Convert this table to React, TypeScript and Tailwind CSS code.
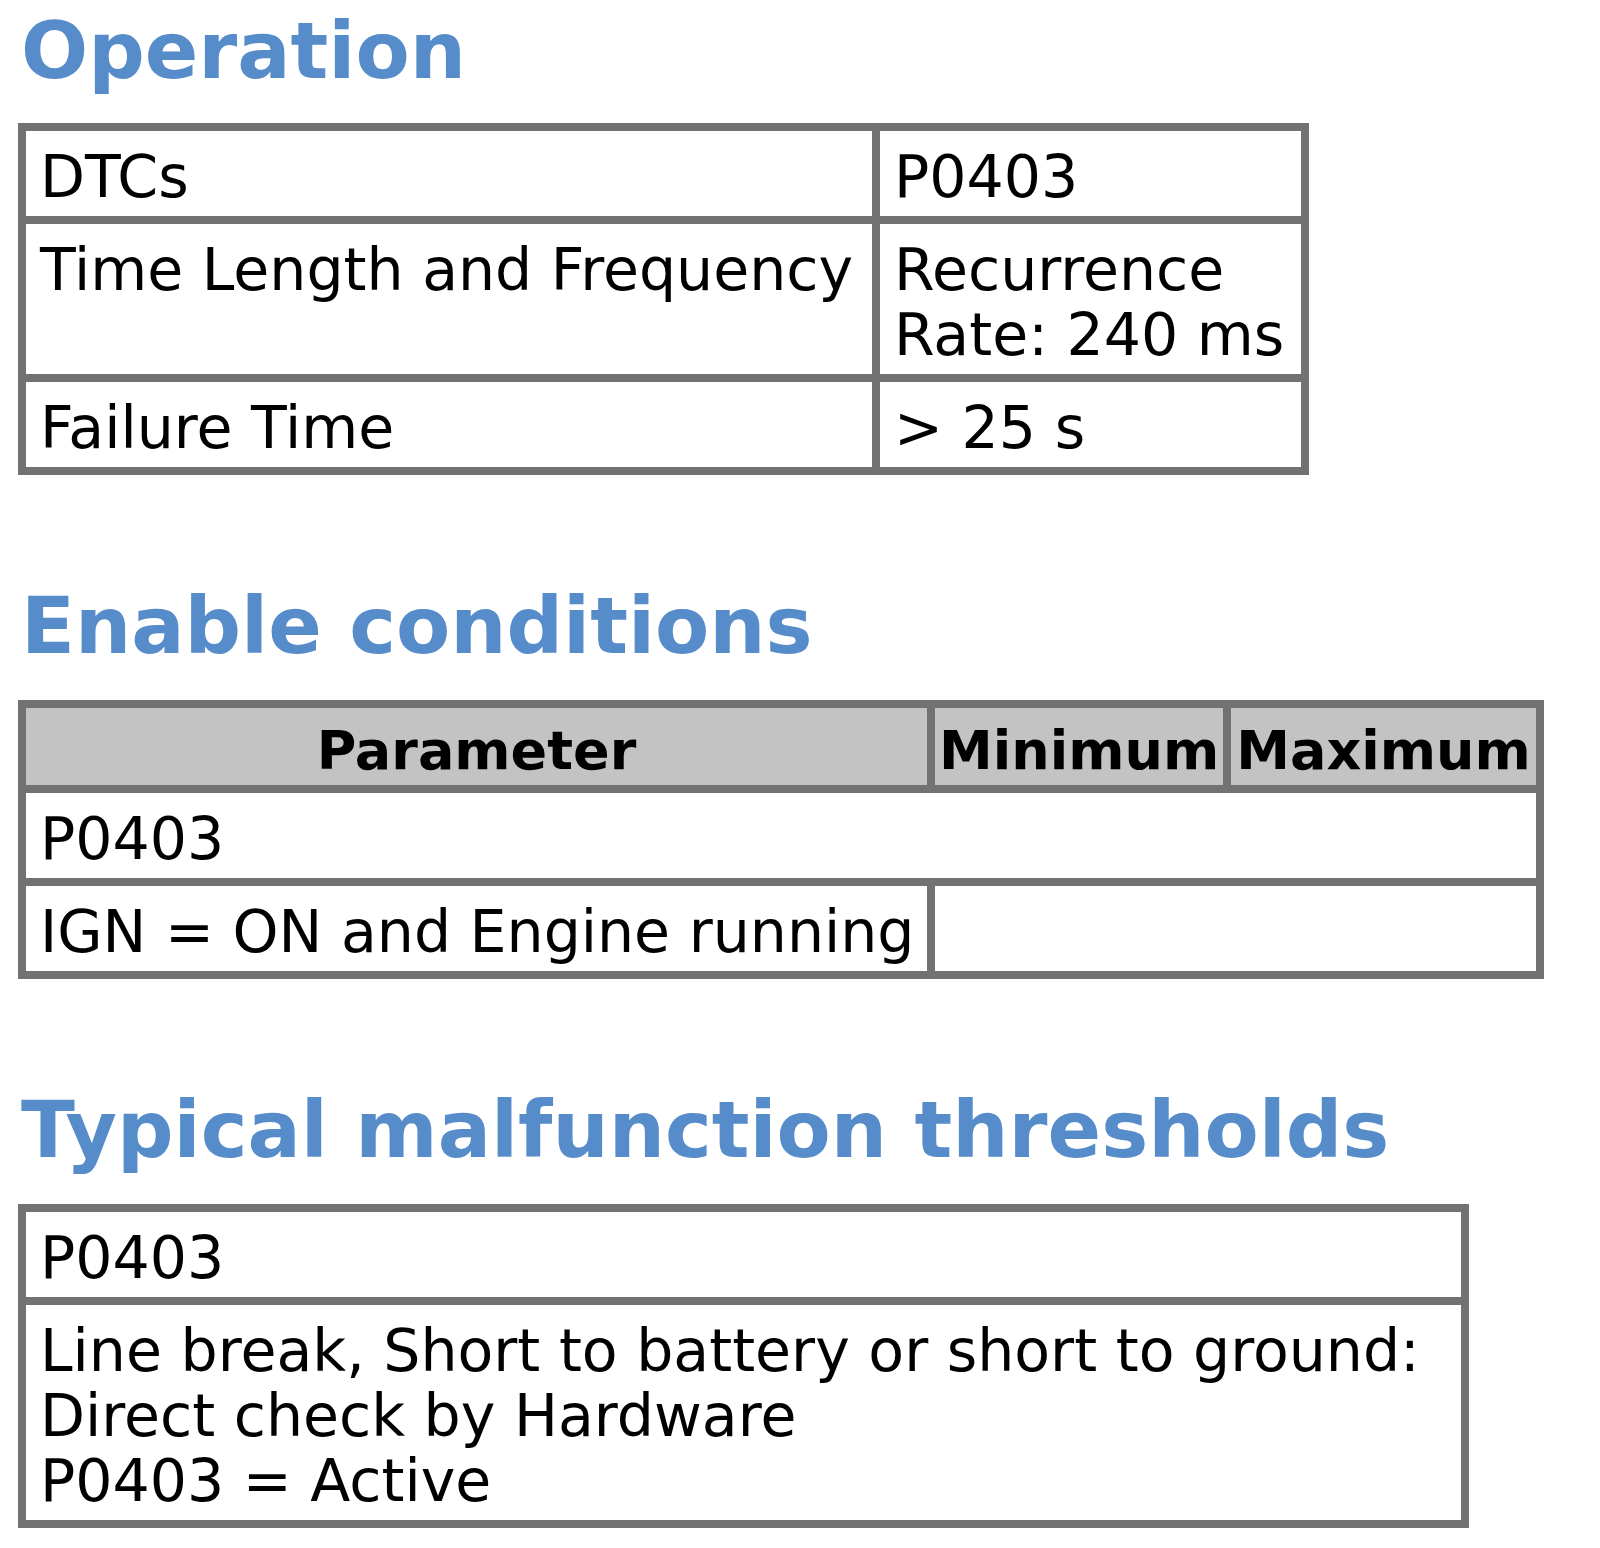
import React from "react";

const font = { fontFamily: '"DejaVu Sans", Verdana, sans-serif' };

function Heading({ children, mt }: { children: React.ReactNode; mt: string }) {
  return (
    <h2 className={`${mt} ml-[3px] text-[79px] leading-[78px] font-bold text-[#578cca] whitespace-nowrap`}>{children}</h2>
  );
}

const td = "border-r-[8px] border-b-[8px] border-[#727272] pl-[14px] pr-[6px] pt-[14px] pb-[6px] align-top text-left font-normal text-black whitespace-nowrap";
const th = "border-r-[8px] border-b-[8px] border-[#727272] px-[4px] pt-[10px] pb-[2px] align-middle text-center font-bold text-[54px] text-black bg-[#c3c3c3] whitespace-nowrap";

export default function App() {
  return (
    <div className="min-h-screen bg-white pl-[18px] pt-[12px]" style={font}>
      <div className="text-[58.5px] leading-[65px]">
        <Heading mt="mt-0">Operation</Heading>
        <table className="mt-[33px] table-fixed border-separate border-spacing-0 border-l-[8px] border-t-[8px] border-[#727272] w-[1291px]">
          <colgroup>
            <col className="w-[854px]" />
            <col className="w-[429px]" />
          </colgroup>
          <tbody>
            <tr>
              <td className={td}>DTCs</td>
              <td className={td}>P0403</td>
            </tr>
            <tr>
              <td className={td}>Time Length and Frequency</td>
              <td className={td}>
                Recurrence
                <br />
                Rate: 240 ms
              </td>
            </tr>
            <tr>
              <td className={td}>Failure Time</td>
              <td className={td}>&gt; 25 s</td>
            </tr>
          </tbody>
        </table>

        <Heading mt="mt-[112px]">Enable conditions</Heading>
        <table className="mt-[35px] table-fixed border-separate border-spacing-0 border-l-[8px] border-t-[8px] border-[#727272] w-[1526px]">
          <colgroup>
            <col className="w-[909px]" />
            <col className="w-[296px]" />
            <col className="w-[313px]" />
          </colgroup>
          <thead>
            <tr>
              <th className={th}>Parameter</th>
              <th className={th}>Minimum</th>
              <th className={th}>Maximum</th>
            </tr>
          </thead>
          <tbody>
            <tr>
              <td className={td} colSpan={3}>P0403</td>
            </tr>
            <tr>
              <td className={td}>IGN = ON and Engine running</td>
              <td className={td} colSpan={2}></td>
            </tr>
          </tbody>
        </table>

        <Heading mt="mt-[112px]">Typical malfunction thresholds</Heading>
        <table className="mt-[35px] table-fixed border-separate border-spacing-0 border-l-[8px] border-t-[8px] border-[#727272] w-[1451px]">
          <tbody>
            <tr>
              <td className={td}>P0403</td>
            </tr>
            <tr>
              <td className={td}>
                Line break, Short to battery or short to ground:
                <br />
                Direct check by Hardware
                <br />
                P0403 = Active
              </td>
            </tr>
          </tbody>
        </table>
      </div>
    </div>
  );
}
